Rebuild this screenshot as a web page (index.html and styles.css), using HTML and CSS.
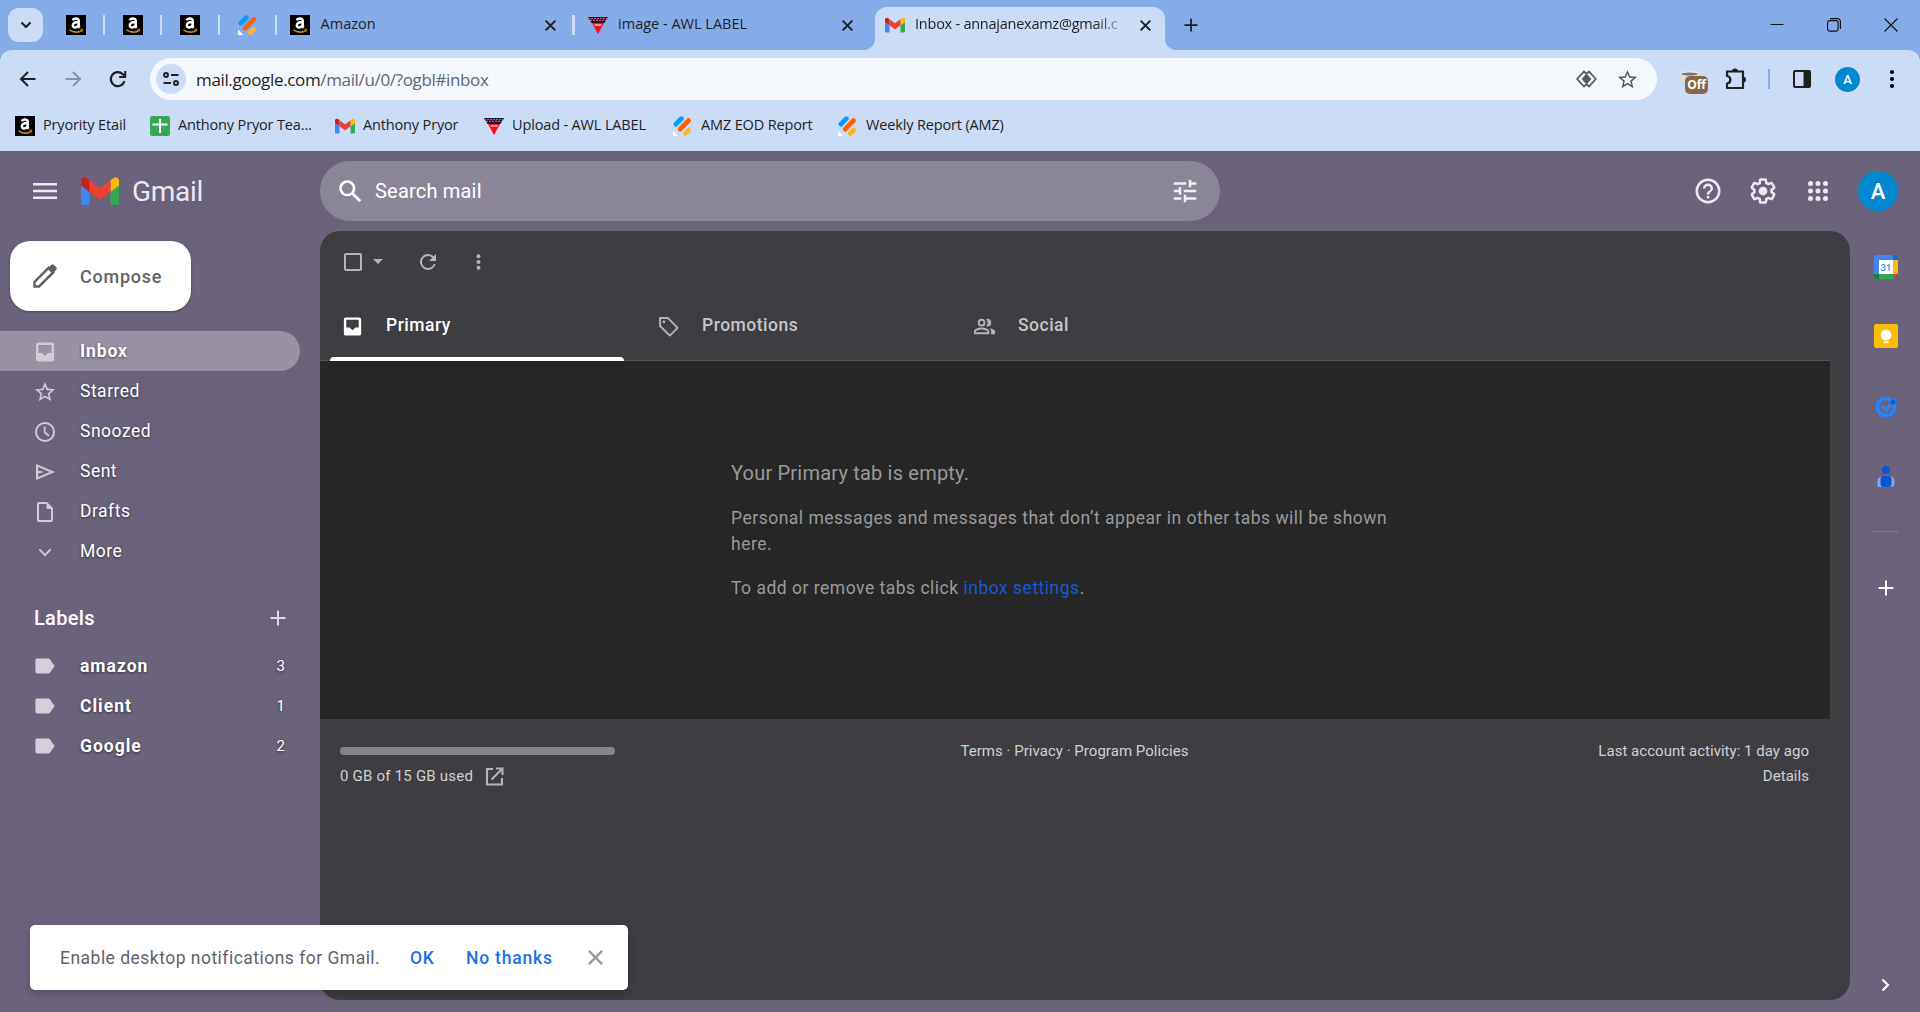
FILE: index.html
```html
<!DOCTYPE html>
<html lang="en">
<head>
<meta charset="utf-8">
<title>Inbox - Gmail</title>
<link rel="stylesheet" href="styles.css">
</head>
<body>
<svg class="defs" width="0" height="0" aria-hidden="true">
  <defs>
    <symbol id="amazon" viewBox="0 0 20 20"><rect width="20" height="20" fill="#000"/><path d="M6.900 5.400C7.300 2.900 12.700 2.600 12.700 5.600v5.200c0 1 .4 1.500 1 2M12.400 6.900c-3.200.1-5.600.8-5.600 3.300 0 3.200 4.600 2.700 5.700-.1" fill="none" stroke="#fff" stroke-width="2.500"/><path d="M3.500 14.800c4 3 9.600 3 12.600.6" fill="none" stroke="#c98324" stroke-width="1.600"/><path d="M14.400 14.300l2.400-.2-.7 2.400" fill="none" stroke="#c98324"/></symbol>
    <symbol id="jot" viewBox="0 0 20 20"><path d="M3 8.200L8.300 2.700" stroke-linecap="round" stroke-width="4.800" stroke="#0a99ff"/><path d="M7.200 13.200l8.300-8.600" stroke-linecap="round" stroke-width="4.800" stroke="#ff6100"/><path d="M12.400 17.400l3.200-3.200" stroke-linecap="round" stroke-width="4.800" stroke="#ffb629"/><path d="M0 14.500L5.300 20H0z" fill="#fff"/></symbol>
    <symbol id="tri" viewBox="0 0 20 20"><path d="M0 2h20l-3.500 6H3.500z" fill="#20112e"/><path d="M4 8h12l-6 11z" fill="#fb0d1b"/><path d="M0 3.500h20M2 5.300h16" stroke="#c85a78" stroke-width="1.200" stroke-dasharray="2 1"/><path d="M6.500 10h7" stroke="#ffa6ae" stroke-width="1.600"/></symbol>
    <symbol id="gmail" viewBox="0 0 40 30"><path d="M0 9l9 6.700V30H2.700A2.700 2.700 0 010 27.300z" fill="#4285f4"/><path d="M31 15.700L40 9v18.300a2.700 2.700 0 01-2.700 2.700H31z" fill="#34a853"/><path d="M31 3.400L34 1.200C36.600-.9 40 .8 40 4v5l-9 6.700z" fill="#fbbc04"/><path d="M0 9V4C0 .8 3.500-.9 6 1.200l3 2.200v12.300z" fill="#c5221f"/><path d="M9 15.700V3.400l11 8.200 11-8.200v12.300l-11 8.200z" fill="#ea4335"/></symbol>
    <symbol id="x" viewBox="0 0 12 12"><path d="M1.500 1.500l9 9m0-9l-9 9" fill="none" stroke="currentColor" stroke-width="1.800"/></symbol>
    <symbol id="plus" viewBox="0 0 16 16"><path d="M8 .5v15M.5 8h15" fill="none" stroke="currentColor" stroke-width="2"/></symbol>
    <symbol id="inbox" viewBox="0 0 24 24"><path fill-rule="evenodd" d="M19 3H5a2 2 0 00-2 2v14a2 2 0 002 2h14a2 2 0 002-2V5a2 2 0 00-2-2zm0 11h-4a3 3 0 01-6 0H5V5h14z"/></symbol>
    <symbol id="inboxfill" viewBox="0 0 24 24"><path fill-rule="evenodd" d="M19 2.500H5a2 2 0 00-2 2v15a2 2 0 002 2h14a2 2 0 002-2v-15a2 2 0 00-2-2zM18.500 13H15l-3 3-3-3H5.500V5h13z"/></symbol>
    <symbol id="star" viewBox="0 0 24 24"><path d="M22 9.240l-7.190-.62L12 2 9.190 8.630 2 9.240l5.460 4.730L5.820 21 12 17.270 18.180 21l-1.630-7.030zM12 15.400l-3.760 2.270 1-4.280-3.320-2.880 4.380-.38L12 6.100l1.710 4.040 4.380.38-3.320 2.880 1 4.280z"/></symbol>
    <symbol id="refresh" viewBox="0 0 24 24"><path d="M17.650 6.350A8 8 0 1019.730 14h-2.080A6 6 0 1112 6c1.660 0 3.140.69 4.220 1.780L13 11h7V4z"/></symbol>
    <symbol id="label" viewBox="0 0 20 16"><path d="M2 .5h11.400c.7 0 1.300.3 1.700.9L19.600 8l-4.500 6.600c-.4.6-1 .9-1.700.9H2A1.700 1.700 0 01.4 13.800V2.200A1.700 1.700 0 012 .5z"/></symbol>
    <symbol id="dots" viewBox="0 0 6 20"><circle cx="3" cy="3" r="2.100"/><circle cx="3" cy="10" r="2.100"/><circle cx="3" cy="17" r="2.100"/></symbol>
  </defs>
</svg>

<header class="chrome">
  <div class="tabstrip">
    <div class="tabsearch"><svg width="12" height="8" viewBox="0 0 12 8"><path d="M1.500 1.500L6 6l4.500-4.500" fill="none" stroke="#1f1f1f" stroke-width="2"/></svg></div>
    <div class="pinned"><svg class="fav"><use href="#amazon"/></svg></div>
    <div class="pinned"><svg class="fav"><use href="#amazon"/></svg></div>
    <div class="pinned"><svg class="fav"><use href="#amazon"/></svg></div>
    <div class="pinned"><svg class="fav"><use href="#jot"/></svg></div>
    <div class="tab"><svg class="fav"><use href="#amazon"/></svg><span>Amazon</span><svg class="close"><use href="#x"/></svg></div>
    <div class="tab last"><svg class="fav"><use href="#tri"/></svg><span>image - AWL LABEL</span><svg class="close"><use href="#x"/></svg></div>
    <div class="tab active"><svg class="fav gm"><use href="#gmail"/></svg><span>Inbox - annajanexamz@gmail.c</span><svg class="close"><use href="#x"/></svg></div>
    <svg class="newtab"><use href="#plus"/></svg>
    <div class="wincontrols">
      <svg width="14" height="14" viewBox="0 0 14 14"><path d="M.5 6.500h13" stroke="#111"/></svg>
      <svg width="14" height="14" viewBox="0 0 14 14"><rect x=".6" y="2.600" width="10.500" height="10.500" rx="1.800" fill="none" stroke="#111" stroke-width="1.100"/><path d="M3 .6h7.500a2.800 2.800 0 012.900 2.800V11" fill="none" stroke="#111" stroke-width="1.100"/></svg>
      <svg width="14" height="14" viewBox="0 0 14 14"><path d="M.5.5l13 13m0-13l-13 13" stroke="#111" stroke-width="1.200"/></svg>
    </div>
  </div>
  <div class="toolbar">
    <svg class="nav" viewBox="0 0 20 20"><path d="M17.500 10H3M10 3l-7 7 7 7" fill="none" stroke="#1f1f1f" stroke-width="2"/></svg>
    <svg class="nav" viewBox="0 0 20 20"><path d="M2.500 10H17M10 3l7 7-7 7" fill="none" stroke="#8492ab" stroke-width="2"/></svg>
    <svg class="nav" viewBox="0 0 20 20"><path d="M16.500 12.200A7 7 0 1114.600 5L17 7.300" fill="none" stroke="#1f1f1f" stroke-width="2.200"/><path d="M17.200 2v6h-6" fill="none" stroke="#1f1f1f" stroke-width="2"/></svg>
    <div class="omnibox">
      <div class="siteinfo"><svg width="16" height="16" viewBox="0 0 16 16" fill="none" stroke="#1f1f1f" stroke-width="1.900"><circle cx="3" cy="4" r="2"/><path d="M8 4h7.500M.5 12H8"/><circle cx="13" cy="12" r="2"/></svg></div>
      <span class="host">mail.google.com</span><span class="path">/mail/u/0/?ogbl#inbox</span>
      <svg class="lens" width="21" height="18" viewBox="0 0 21 18"><path d="M10.500 3.700L8 1.500 1.200 9 8 16.500l2.500-2.200 2.500 2.200L19.800 9 13 1.500z" fill="none" stroke="#555b66" stroke-width="1.800"/><path d="M10.500 3.500L15.400 9l-4.900 5.500L5.600 9z" fill="#555b66"/></svg>
      <svg class="bookstar" width="23" height="23"><use href="#star"/></svg>
    </div>
    <div class="offext"><svg width="22" height="14" viewBox="0 0 22 14"><ellipse cx="10.500" cy="3" rx="9" ry="2.300" fill="#777" stroke="#e9e9e3" stroke-width="1.400"/><path d="M1 3l1.500 9h4V5z" fill="#dcdcd8"/></svg><b>Off</b></div>
    <svg class="puzzle" width="22" height="22" viewBox="0 0 22 22"><path d="M2 3.500h16V20H2v-4.500c4.500-.5 4.500-7 0-7.500z" fill="none" stroke="#1f1f1f" stroke-width="2.200" stroke-linejoin="round"/><path d="M7 3.500a3 3 0 016 0zM18 8.700a3 3 0 010 6z" fill="#1f1f1f"/></svg>
    <i class="tooldiv"></i>
    <svg class="panel" width="18" height="18" viewBox="0 0 18 18"><rect x="1" y="1" width="16" height="16" rx="1" fill="none" stroke="#1f1f1f" stroke-width="2"/><path d="M10.500 1H17v16h-6.500z" fill="#1f1f1f"/></svg>
    <div class="avatar small">A</div>
    <svg class="kebab" width="6" height="20"><use href="#dots"/></svg>
  </div>
  <div class="bookmarks">
    <a class="bm1"><svg class="fav"><use href="#amazon"/></svg><span>Pryority Etail</span></a>
    <a class="bm2"><svg class="fav" viewBox="0 0 20 20"><rect width="20" height="20" rx="2" fill="#34a853"/><path d="M10 3v14M2.500 8.500h15" stroke="#fff" stroke-width="2.200"/></svg><span>Anthony Pryor Tea...</span></a>
    <a class="bm3"><svg class="fav gm"><use href="#gmail"/></svg><span>Anthony Pryor</span></a>
    <a class="bm4"><svg class="fav"><use href="#tri"/></svg><span>Upload - AWL LABEL</span></a>
    <a class="bm5"><svg class="fav"><use href="#jot"/></svg><span>AMZ EOD Report</span></a>
    <a class="bm6"><svg class="fav"><use href="#jot"/></svg><span>Weekly Report (AMZ)</span></a>
  </div>
</header>

<div class="mail">
  <div class="topbar">
    <svg class="burger" width="24" height="18" viewBox="0 0 24 18"><path d="M0 2.200h24M0 9h24M0 15.800h24" stroke="#eceaf0" stroke-width="2.400"/></svg>
    <svg class="logo" width="38" height="28.500"><use href="#gmail"/></svg>
    <span class="brand">Gmail</span>
    <div class="search">
      <svg width="22" height="22" viewBox="0 0 22 22"><circle cx="8.300" cy="8.300" r="6.800" fill="none" stroke="#fff" stroke-width="2.500"/><path d="M13.200 13.200l8 8" stroke="#fff" stroke-width="2.700"/></svg>
      <span>Search mail</span>
      <svg class="tune" width="30" height="30" viewBox="0 0 24 24" fill="#f1f0f4"><path d="M3 17v2h6v-2zM3 5v2h10V5zm10 16v-2h8v-2h-8v-2h-2v6zM7 9v2H3v2h4v2h2V9zm14 4v-2H11v2zm-6-4h2V7h4V5h-4V3h-2z"/></svg>
    </div>
    <div class="topicons">
      <svg width="30" height="30" viewBox="0 0 24 24" fill="#eceaf0"><path d="M11 18h2v-2h-2zm1-16a10 10 0 100 20 10 10 0 000-20zm0 18a8 8 0 110-16 8 8 0 010 16zm0-14a4 4 0 00-4 4h2a2 2 0 114 0c0 2-3 1.750-3 5h2c0-2.250 3-2.500 3-5a4 4 0 00-4-4z"/></svg>
      <svg width="30" height="30" viewBox="0 0 24 24" fill="#eceaf0"><path d="M13.850 22.250h-3.700c-.74 0-1.360-.54-1.450-1.270l-.27-1.890c-.27-.14-.53-.29-.79-.46l-1.800.72c-.7.26-1.470-.03-1.810-.65L2.200 15.530c-.35-.66-.2-1.440.36-1.880l1.530-1.190c-.01-.15-.02-.3-.02-.46 0-.15.01-.31.02-.46l-1.520-1.190c-.59-.45-.74-1.260-.37-1.880l1.850-3.190c.34-.62 1.110-.9 1.790-.63l1.810.73c.26-.17.52-.32.78-.46l.27-1.910c.09-.7.710-1.250 1.440-1.250h3.700c.74 0 1.360.54 1.450 1.270l.27 1.890c.27.14.53.29.79.46l1.800-.72c.71-.26 1.480.03 1.820.65l1.840 3.180c.36.66.2 1.440-.36 1.880l-1.520 1.190c.01.15.02.3.020.460s-.01.31-.02.46l1.520 1.190c.56.45.72 1.230.37 1.860l-1.860 3.220c-.34.62-1.110.9-1.800.63l-1.800-.72c-.26.17-.52.32-.78.46l-.27 1.910c-.1.680-.720 1.220-1.460 1.220zm-3.230-2h2.760l.37-2.550.53-.22c.44-.18.88-.44 1.340-.78l.45-.34 2.380.96 1.380-2.400-2.030-1.580.07-.56c.03-.26.06-.51.06-.78s-.03-.53-.06-.78l-.07-.56 2.030-1.580-1.390-2.400-2.390.96-.45-.35c-.42-.32-.87-.58-1.330-.77l-.52-.22-.37-2.550h-2.760l-.37 2.550-.53.21c-.44.19-.88.44-1.340.79l-.45.33-2.380-.95-1.390 2.390 2.030 1.580-.07.56a7 7 0 000 1.560l.07.56-2.030 1.580 1.380 2.400 2.390-.96.450.350c.43.33.86.58 1.330.77l.53.22z"/><circle cx="12" cy="12" r="3.500"/></svg>
      <svg width="30" height="30" viewBox="0 0 24 24" fill="#eceaf0"><circle cx="6" cy="6" r="2"/><circle cx="12" cy="6" r="2"/><circle cx="18" cy="6" r="2"/><circle cx="6" cy="12" r="2"/><circle cx="12" cy="12" r="2"/><circle cx="18" cy="12" r="2"/><circle cx="6" cy="18" r="2"/><circle cx="12" cy="18" r="2"/><circle cx="18" cy="18" r="2"/></svg>
      <div class="avatar">A</div>
    </div>
  </div>

  <div class="body">
    <aside class="sidebar">
      <button class="compose"><svg width="24" height="24" viewBox="0 0 24 24"><path d="M1.500 22.500v-4.600L15.600 3.800l4.600 4.600L6.100 22.500z" fill="none" stroke="#5f6368" stroke-width="2.500"/><path d="M14.500 4.500l3.600-3.600c.8-.8 2-.8 2.800 0l2.200 2.200c.8.8.8 2 0 2.800l-3.600 3.600z" fill="#5f6368"/></svg><span>Compose</span></button>
      <nav class="folders">
        <a class="row current"><svg class="ic"><use href="#inboxfill"/></svg><span>Inbox</span></a>
        <a class="row"><svg class="ic"><use href="#star"/></svg><span>Starred</span></a>
        <a class="row"><svg class="ic" viewBox="0 0 24 24"><path d="M12 2a10 10 0 100 20 10 10 0 000-20zm0 18a8 8 0 110-16 8 8 0 010 16zm.5-13.500H10.800v6.200l4.500 3.700 1.200-1.500-4-3.200z"/></svg><span>Snoozed</span></a>
        <a class="row"><svg class="ic" viewBox="0 0 24 24"><path fill-rule="evenodd" d="M3 4v16l19-8zm2 3l11.900 5L5 17v-3.500l6-1.500-6-1.500z"/></svg><span>Sent</span></a>
        <a class="row"><svg class="ic" viewBox="0 0 24 24"><path fill-rule="evenodd" d="M14 2H6a2 2 0 00-2 2v16a2 2 0 002 2h12a2 2 0 002-2V8zM6 4h7.500v5H18v11H6z"/></svg><span>Drafts</span></a>
        <a class="row"><svg class="ic" viewBox="0 0 24 24"><path d="M17 8.800l-5 5-5-5-1.300 1.300L12 16.400l6.300-6.300z"/></svg><span>More</span></a>
      </nav>
      <div class="labelshead"><span>Labels</span><svg width="16" height="16"><use href="#plus"/></svg></div>
      <nav class="labels">
        <a class="row"><svg class="lb"><use href="#label"/></svg><span>amazon</span><em>3</em></a>
        <a class="row"><svg class="lb"><use href="#label"/></svg><span>Client</span><em>1</em></a>
        <a class="row"><svg class="lb"><use href="#label"/></svg><span>Google</span><em>2</em></a>
      </nav>
    </aside>

    <main class="pane">
      <div class="actions">
        <svg width="18" height="18" viewBox="0 0 18 18"><rect x="1" y="1" width="16" height="16" rx="1" fill="none" stroke="#b4b3b6" stroke-width="2"/></svg>
        <svg class="caret" width="10" height="5" viewBox="0 0 10 5"><path d="M0 0h10L5 5z"/></svg>
        <svg class="reload" width="24" height="24"><use href="#refresh"/></svg>
        <svg class="more" width="5" height="16" viewBox="0 0 5 16"><circle cx="2.500" cy="2.300" r="2"/><circle cx="2.500" cy="8" r="2"/><circle cx="2.500" cy="13.700" r="2"/></svg>
      </div>
      <div class="tabs">
        <div class="mtab on"><svg class="ti"><use href="#inboxfill"/></svg><span>Primary</span></div>
        <div class="mtab"><svg class="ti tag" viewBox="0 0 24 24"><path d="M3.200 3.200h8.300l10 10.200-8.100 8.100-10.200-10z" fill="none" stroke="#b4b3b6" stroke-width="2" stroke-linejoin="round"/><circle cx="7.200" cy="7.200" r="1.500"/></svg><span>Promotions</span></div>
        <div class="mtab"><svg class="ti" viewBox="0 0 24 24"><path fill-rule="evenodd" d="M9 12a4 4 0 100-8 4 4 0 000 8zm0-6a2 2 0 110 4 2 2 0 010-4zM1 20v-2.800C1 14.500 6 13 9 13s8 1.500 8 4.200V20zm2-2h12v-.8C15 16.200 11.500 15 9 15s-6 1.200-6 2.200zM15 12a4 4 0 000-8l-1.300.2a6 6 0 010 7.600zM18.900 20v-2.800c0-1.400-.8-2.600-2-3.500 3 .4 6.100 1.600 6.100 3.500V20z"/></svg><span>Social</span></div>
      </div>
      <section class="empty">
        <div>
          <h2>Your Primary tab is empty.</h2>
          <p>Personal messages and messages that don’t appear in other tabs will be shown here.</p>
          <p>To add or remove tabs click <a>inbox settings</a>.</p>
        </div>
      </section>
      <footer>
        <div class="quota"><i></i><div><span>0 GB of 15 GB used</span><svg width="19" height="19" viewBox="0 0 19 19" fill="none" stroke="#b4b3b6" stroke-width="2.100"><path d="M8 2H2v15.500h15V11M11 1.500h6.500V8M17 2L6.500 12.500"/></svg></div></div>
        <div class="terms">Terms · Privacy · Program Policies</div>
        <div class="activity"><span>Last account activity: 1 day ago</span><br><span>Details</span></div>
      </footer>
    </main>

    <aside class="rail">
      <svg class="cal" width="24" height="24" viewBox="0 0 24 24"><path d="M2 0h17v5H5v14H0V2a2 2 0 012-2z" fill="#4285f4"/><path d="M19 0h3a2 2 0 012 2v3h-5z" fill="#1967d2"/><path d="M19 5h5v14h-5z" fill="#fbbc04"/><path d="M5 19h14v5H5z" fill="#34a853"/><path d="M0 19h5v5H2a2 2 0 01-2-2z" fill="#188038"/><path d="M19 19h5l-5 5z" fill="#ea4335"/><path d="M5 5h14v14H5z" fill="#fff"/><text x="12" y="15.800" text-anchor="middle" class="caltext">31</text></svg>
      <svg class="keep" width="24" height="24" viewBox="0 0 24 24"><rect width="24" height="24" rx="2" fill="#fbbc04"/><circle cx="12" cy="11" r="5.400" fill="#fff"/><path d="M9.500 14h5v2h-5zM9.500 17.300h5v1.900h-5z" fill="#fff"/></svg>
      <svg class="tasks" width="24" height="24" viewBox="0 0 24 24"><circle cx="12" cy="13" r="8.700" fill="none" stroke="#2684fc" stroke-width="3.700"/><path d="M7.800 12.300l3.900 3.600 5-5.200" fill="none" stroke="#2684fc" stroke-width="3.400"/><path d="M18.700 8.300l3.500-3.500" stroke="#2684fc" stroke-width="3.800"/><circle cx="19" cy="7.800" r="2.600" fill="#0066da"/></svg>
      <svg class="people" width="24" height="24" viewBox="0 0 24 24"><path d="M8 12.500a5 5 0 00-4.500 4.800V23H9zM16 12.200a5 5 0 014.500 4.800v2.500a3.500 3.500 0 01-4 3.500z" fill="#7baaf7"/><circle cx="12" cy="6" r="4.200" fill="#0b57d0"/><rect x="6.500" y="12" width="11" height="11" rx="3.500" fill="#0b57d0"/></svg>
      <i></i>
      <svg class="add" width="16" height="16"><use href="#plus"/></svg>
      <svg class="chev" width="9" height="14" viewBox="0 0 9 14"><path d="M1.500 1.500L7 7l-5.500 5.500" fill="none" stroke="#fff" stroke-width="2.100"/></svg>
    </aside>
  </div>
</div>

<div class="toast"><span class="msg">Enable desktop notifications for Gmail.</span><b class="ok">OK</b><b class="no">No thanks</b><svg width="15" height="15" viewBox="0 0 16 16"><path d="M1 1l14 14M15 1L1 15" stroke="#97999c" stroke-width="2.500"/></svg></div>
</body>
</html>
```

FILE: styles.css
```css
* { box-sizing: border-box; }
body { margin: 0; width: 1920px; height: 1012px; overflow: hidden; background: #6b637b; font-family: Roboto, "Liberation Sans", sans-serif; font-size: 17.5px; letter-spacing: .5px; }
svg { flex: none; display: block; }
.defs { position: absolute; }
span, a, em, b { white-space: nowrap; }

/* browser chrome */
.chrome { height: 151px; background: #cbdcf6; font-family: "Open Sans", "Noto Sans", sans-serif; font-size: 14.5px; letter-spacing: -.15px; color: #1f1f1f; }
.tabstrip { height: 50px; background: #86abe9; display: flex; align-items: center; padding-left: 8px; }
.tabsearch { width: 35px; height: 34px; border-radius: 11px; background: #cbdcf6; display: grid; place-items: center; margin-right: 4.5px; }
.fav { width: 20px; height: 20px; }
.fav.gm { height: 16px; }
.pinned { width: 57.4px; height: 20px; padding-left: 18px; border-right: 2px solid #cbdcf6; }
.tab { display: flex; align-items: center; height: 20px; width: 297.5px; padding-left: 13px; border-right: 3px solid #cbdcf6; }
.tab span { margin-left: 10.5px; flex: 1; line-height: 20px; padding-bottom: 2px; letter-spacing: 0; }
.tab .close { width: 13px; height: 13px; margin-right: 15px; }
.tab.last { width: 298px; border: 0; margin-right: 2px; }
.tab.last .close { margin-right: 19px; }
.tab.active { position: relative; height: 43px; width: 290px; margin: 7px 0 0; padding: 0 0 7px 10px; border: 0; border-radius: 12px 12px 0 0; background: #cbdcf6; }
.tab.active::before, .tab.active::after { content: ""; position: absolute; bottom: 0; width: 12px; height: 12px; }
.tab.active::before { left: -12px; background: radial-gradient(circle at 0 0, #86abe9 12px, #cbdcf6 12.5px); }
.tab.active::after { right: -12px; background: radial-gradient(circle at 100% 0, #86abe9 12px, #cbdcf6 12.5px); }
.tab.active span { flex: none; width: 209px; margin-right: 15px; letter-spacing: -.25px; -webkit-mask-image: linear-gradient(90deg, #000 180px, transparent 214px); }
.tab.active .close { margin: 0; }
.newtab { width: 14px; height: 14px; margin-left: 19px; }
.wincontrols { display: flex; gap: 43px; margin-left: auto; margin-right: 22px; }
.toolbar { height: 58px; display: flex; align-items: center; padding-left: 18px; border-radius: 12px 12px 0 0; background: #cbdcf6; box-shadow: 0 -12px 0 12px #86abe9; clip-path: inset(0); }
.nav { width: 20px; height: 20px; margin-right: 25px; }
.omnibox { width: 1507px; height: 42px; border-radius: 21px; background: #f4f8fd; margin-left: -3px; display: flex; align-items: center; padding-left: 6px; font-size: 17px; letter-spacing: -.35px; }
.siteinfo { width: 30px; height: 30px; border-radius: 15px; background: #cbdcf6; display: grid; place-items: center; margin-right: 10px; }
.path { color: #5f6672; }
.lens { margin-left: auto; margin-right: 19px; }
.bookstar { fill: #555b66; margin-right: 18px; }
.offext { position: relative; width: 30px; height: 26px; margin-left: 22px; padding-top: 5px; }
.offext b { position: absolute; left: 6px; top: 10px; width: 23px; height: 18px; border-radius: 5px; background: #876747; color: #fff; font: bold 12px/18px "Open Sans", sans-serif; text-align: center; }
.puzzle { margin-left: 16px; }
.tooldiv { width: 2px; height: 20px; background: #86abe9; margin-left: 21px; }
.panel { margin-left: 23px; }
.avatar { width: 40px; height: 40px; border-radius: 50%; background: #0288d1; color: #fff; display: grid; place-items: center; font: 500 22px Roboto, sans-serif; letter-spacing: 0; }
.avatar.small { width: 25px; height: 25px; font-size: 13px; margin-left: 24px; }
.kebab { margin-left: 29px; }
.bookmarks { height: 43px; display: flex; align-items: center; padding: 0 0 7px 15px; }
.bookmarks a { display: flex; align-items: center; height: 22px; }
.bookmarks a span { margin-left: 8px; line-height: 20px; padding-bottom: 2px; }
.bm1 { width: 135px; } .bm2 { width: 185px; } .bm3 { width: 149px; } .bm4 { width: 189px; } .bm5 { width: 165px; }

/* mail header */
.topbar { height: 80px; display: flex; align-items: center; padding-left: 33px; color: #fff; }
.burger { margin-right: 24px; }
.brand { font-size: 28px; color: #eceaf0; margin-left: 13px; width: 188px; line-height: 36px; padding-top: 2px; letter-spacing: -.3px; }
.search { width: 900px; height: 60px; border-radius: 30px; background: #8b8697; display: flex; align-items: center; padding: 0 20px 0 19px; }
.search span { font-size: 20px; margin-left: 14px; letter-spacing: .2px; }
.tune { margin-left: auto; }
.topicons { display: flex; align-items: center; gap: 25px; margin-left: auto; margin-right: 22px; }

.body { height: 781px; display: flex; }
.sidebar { width: 320px; padding-top: 10px; color: #fff; }
.compose { display: flex; align-items: center; width: 181px; height: 70px; margin: 0 0 20px 10px; padding: 0 0 0 23px; border: 0; border-radius: 20px; background: #fff; color: #5f6368; font: 500 18px Roboto, sans-serif; letter-spacing: .75px; box-shadow: 0 1px 3px rgba(0,0,0,.3); }
.compose span { margin-left: 23px; }
.row { display: flex; align-items: center; height: 40px; width: 300px; padding: 0 15px 0 33px; text-shadow: 0 1px 3px rgba(0,0,0,.55); }
.row.current { background: #9991a4; border-radius: 0 20px 20px 0; font-weight: 700; letter-spacing: .9px; }
.ic { width: 24px; height: 24px; margin: 1px 23px 0 0; fill: #d0cdd6; }
.labelshead { height: 75px; display: flex; align-items: center; justify-content: space-between; padding: 19px 34px 0 34px; font-size: 20px; font-weight: 500; letter-spacing: .3px; }
.labelshead svg { color: #dedbe3; }
.lb { width: 20px; height: 16px; margin: 0 25px 0 2px; fill: #d3d0d9; }
.labels .row { font-weight: 700; letter-spacing: 1px; }
.labels em { margin-left: auto; font-style: normal; font-weight: 400; font-size: 15px; letter-spacing: 0; }

.pane { width: 1530px; height: 769px; border-radius: 20px; background: #3e3d42; overflow: hidden; }
.actions { height: 61px; display: flex; align-items: center; padding-left: 23.5px; fill: #b4b3b6; }
.caret { margin-left: 11px; }
.reload { margin-left: 33px; }
.more { margin-left: 36px; }
.tabs { height: 69px; width: 1510px; display: flex; border-bottom: 1px solid #555458; padding-left: 10px; }
.mtab { position: relative; width: 316px; height: 68px; display: flex; align-items: center; padding-left: 11px; color: #c6c5c8; font-weight: 500; fill: #b4b3b6; }
.mtab span { padding-bottom: 3px; }
.mtab.on { color: #fff; fill: #fff; }
.mtab.on::after { content: ""; position: absolute; left: 0; bottom: -1px; width: 294px; height: 4px; border-radius: 4px 4px 0 0; background: #fff; }
.ti { width: 23px; height: 23px; margin-right: 22px; }
.empty { width: 1510px; height: 358px; background: #262626; color: #9a9a9a; display: flex; padding: 98px 0 0 411px; }
.empty div { width: 672px; }
.empty h2 { margin: 0; font-size: 20px; font-weight: 400; line-height: 28px; letter-spacing: .2px; }
.empty p { margin: 18px 0 0; line-height: 26px; }
.empty a { color: #1558d6; }
footer { display: grid; grid-template-columns: 1fr 1fr 1fr; width: 1510px; padding: 20px 21px 0 20px; font-size: 15px; line-height: 25px; letter-spacing: .03px; color: #d0cfd2; }
.quota i { display: block; width: 275px; height: 8px; border-radius: 4px; background: #80868b; margin: 8px 0 7px; }
.quota div { display: flex; align-items: center; padding-top: 2px; letter-spacing: .22px; }
.quota svg { margin-left: 12px; }
.terms { text-align: center; }
.activity { text-align: right; }

.rail { width: 70px; height: 781px; display: flex; flex-direction: column; align-items: center; padding: 23.5px 0 0 1px; color: #fff; }
.caltext { font: 500 9.5px Roboto, sans-serif; letter-spacing: 0; fill: #4285f4; }
.rail .keep, .rail .tasks { margin-top: 45.5px; }
.rail .people { margin-top: 46px; }
.rail i { width: 25px; height: 1px; background: #857e92; margin-top: 43px; }
.add { margin-top: 48px; }
.chev { margin-top: 382px; }

.toast { position: absolute; left: 30px; top: 925px; width: 598px; height: 65px; border-radius: 5px; background: #fff; display: flex; align-items: center; padding-left: 30px; color: #5f6368; letter-spacing: .48px; box-shadow: 0 3px 8px rgba(0,0,0,.25); }
.toast b { font-weight: 500; color: #1a73e8; letter-spacing: .8px; }
.msg { width: 350px; }
.ok { width: 56px; }
.no { width: 121.500px; }
```
